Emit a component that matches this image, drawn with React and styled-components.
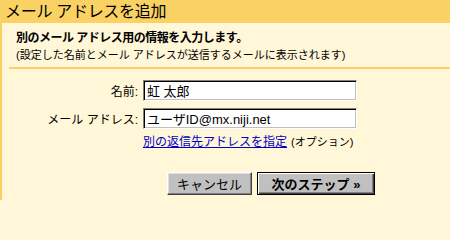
import React from "react";
import styled, { createGlobalStyle } from "styled-components";

const Global = createGlobalStyle`
  html, body { margin: 0; padding: 0; background: #fff7d7; }
  body { font-family: "Liberation Sans", "Noto Sans CJK JP", sans-serif; color: #000; }
  * { box-sizing: border-box; }
`;

const Page = styled.div`
  width: 450px;
  height: 200px;
  overflow: hidden;
  display: flex;
  flex-direction: column;
  background: #fff7d7;
`;

const TitleBar = styled.div`
  height: 23px;
  flex: none;
  background: #fad163;
  padding-left: 5px;
  font-size: 16px;
  line-height: 23px;
  letter-spacing: -0.3px;
  white-space: nowrap;
`;

const Panel = styled.div`
  flex: 1;
  border-left: 2px solid #fad163;
  display: flex;
  flex-direction: column;
`;

const Intro = styled.div`
  padding: 7px 0 0 14px;
`;

const Heading = styled.div`
  font-size: 12px;
  font-weight: bold;
  line-height: 16px;
  letter-spacing: -0.5px;
  white-space: nowrap;
`;

const Note = styled.div`
  margin-top: 2px;
  font-size: 11px;
  line-height: 14px;
  white-space: nowrap;
`;

const Rule = styled.div`
  margin: 5px 0 0 7px;
  height: 2px;
  background: #fad163;
`;

const Form = styled.div`
  margin-top: 11px;
  display: grid;
  grid-template-columns: 136px 214px;
  column-gap: 5px;
  row-gap: 7px;
  align-items: center;
`;

const Label = styled.label`
  text-align: right;
  font-size: 12px;
  white-space: nowrap;
`;

const Field = styled.input`
  height: 21px;
  width: 214px;
  margin: 0;
  padding: 0 3px;
  font-family: "Liberation Sans", "Noto Sans CJK JP", sans-serif;
  font-size: 13px;
  color: #000;
  background: #fff;
  border: 1px solid;
  border-color: #808080 #fff #fff #808080;
  box-shadow: inset 1px 1px #000, inset -1px -1px #c0c0c0;
  outline: none;
`;

const Options = styled.div`
  grid-column: 2;
  margin-top: -2px;
  white-space: nowrap;
  line-height: 14px;
`;

const Link = styled.a`
  color: #0000cc;
  text-decoration: underline;
  font-size: 12px;
`;

const Hint = styled.span`
  font-size: 11px;
  margin-left: 4px;
`;

const Buttons = styled.div`
  margin-top: 23px;
  padding-left: 165px;
  display: flex;
  gap: 5px;
`;

const Button = styled.button`
  height: 23px;
  width: ${(p) => p.$w}px;
  margin: 0;
  padding: 0;
  background: #c0c0c0;
  font-family: "Liberation Sans", "Noto Sans CJK JP", sans-serif;
  font-size: 13px;
  font-weight: ${(p) => (p.$primary ? "bold" : "normal")};
  color: #000;
  border: 1px solid;
  border-color: ${(p) => (p.$primary ? "#000" : "#fff #404040 #404040 #fff")};
  box-shadow: ${(p) =>
    p.$primary
      ? "inset 1px 1px #fff, inset -1px -1px #404040, inset -2px -2px #808080"
      : "inset -1px -1px #808080, inset 1px 1px #dfdfdf"};
  white-space: nowrap;
`;

export default function App() {
  return (
    <Page>
      <Global />
      <TitleBar>メール アドレスを追加</TitleBar>
      <Panel>
        <Intro>
          <Heading>別のメール アドレス用の情報を入力します。</Heading>
          <Note>(設定した名前とメール アドレスが送信するメールに表示されます)</Note>
        </Intro>
        <Rule />
        <Form>
          <Label>名前:</Label>
          <Field defaultValue="虹 太郎" />
          <Label>メール アドレス:</Label>
          <Field defaultValue="ユーザID@mx.niji.net" />
          <Options>
            <Link href="#">別の返信先アドレスを指定</Link>
            <Hint>(オプション)</Hint>
          </Options>
        </Form>
        <Buttons>
          <Button $w={85}>キャンセル</Button>
          <Button $w={118} $primary>次のステップ »</Button>
        </Buttons>
      </Panel>
    </Page>
  );
}
